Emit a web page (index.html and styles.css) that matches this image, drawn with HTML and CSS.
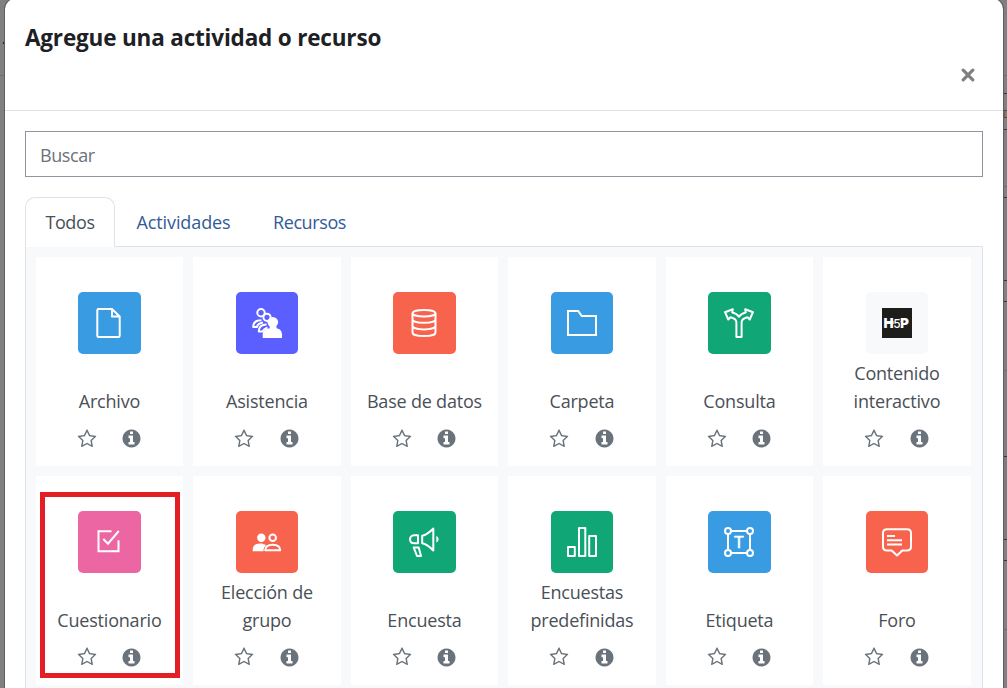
FILE: index.html
```html
<!DOCTYPE html>
<html lang="es">
    <head>
        <meta charset="UTF-8">
        <meta name="viewport" content="width=device-width, initial-scale=1.0">
        <title>Agregue una actividad o recurso</title>
        <link rel="stylesheet" href="styles.css">
    </head>
    <body>
        <!-- Shared icons -->
        <svg class="icon-defs" aria-hidden="true">
            <symbol id="star" viewBox="0 0 1792 1792"><path d="M1201 1004l306-297-422-62-189-382-189 382-422 62 306 297-73 421 378-199 377 199zm527-357q0 22-26 48l-363 354 86 500q1 7 1 20 0 50-41 50-19 0-40-12l-449-236-449 236q-22 12-40 12-21 0-31.500-14.500t-10.500-35.500q0-6 2-20l86-500-364-354q-25-27-25-48 0-37 56-46l502-73 225-455q19-41 49-41t49 41l225 455 502 73q56 9 56 46z"/></symbol>
            <symbol id="info" viewBox="0 0 1792 1792"><path d="M1152 1376v-160q0-14-9-23t-23-9h-96v-512q0-14-9-23t-23-9h-320q-14 0-23 9t-9 23v160q0 14 9 23t23 9h96v320h-96q-14 0-23 9t-9 23v160q0 14 9 23t23 9h448q14 0 23-9t9-23zm-128-896v-160q0-14-9-23t-23-9h-192q-14 0-23 9t-9 23v160q0 14 9 23t23 9h192q14 0 23-9t9-23zm640 416q0 209-103 385.500t-279.500 279.500-385.500 103-385.500-103-279.500-279.500-103-385.500 103-385.500 279.500-279.500 385.500-103 385.500 103 279.500 279.500 103 385.500z"/></symbol>
        </svg>

        <!-- Dimmed page behind the dialog -->
        <svg class="backdrop-left" viewBox="0 0 4 688" aria-hidden="true">
            <path d="M0 75.500h4" stroke="#6e6e6e"/>
            <path d="M4 42v2" stroke="#222" stroke-width="2"/>
        </svg>

        <div class="modal" role="dialog" aria-labelledby="modalTitle">
            <div class="modal-header">
                <h5 class="modal-title" id="modalTitle">Agregue una actividad o recurso</h5>
                <button type="button" class="close-btn" aria-label="Cerrar">
                    <svg viewBox="0 0 14 14"><path d="M2.200 2.200l9.600 9.600M11.800 2.200l-9.600 9.600"/></svg>
                </button>
            </div>
            <div class="modal-body">
                <input type="text" class="search-input" placeholder="Buscar">
                <ul class="tabs">
                    <li><a class="tab active">Todos</a></li>
                    <li><a class="tab tab-activities">Actividades</a></li>
                    <li><a class="tab tab-resources">Recursos</a></li>
                </ul>
                <div class="options">
                    <div class="option">
                        <div class="option-icon blue">
                            <svg viewBox="0 0 30 30"><path d="M18 1H4.500Q3.300 1 3.300 2.200V27.800Q3.300 29 4.500 29H24.500Q25.700 29 25.700 27.800V8.500L18 1V8.500H25.700"/></svg>
                        </div>
                        <div class="option-name"><span>Archivo</span></div>
                        <div class="option-actions"><svg class="star"><use href="#star"/></svg><svg class="info"><use href="#info"/></svg></div>
                    </div>
                    <div class="option">
                        <div class="option-icon purple">
                            <svg viewBox="0 0 30 30">
                                <circle cx="9" cy="4.700" r="3.700"/>
                                <path d="M9.500 12.300C4.500 12.300 1.200 14.500 1.200 19H5C5.500 16.500 7.500 15 11 14.500"/>
                                <circle class="cutout" cx="15" cy="9.300" r="3.600"/>
                                <path d="M14.500 16.500C9.500 16.500 6.800 19 6.800 23.500H10.500C11.500 21.500 13 20.500 15.500 19.500"/>
                                <circle class="solid" cx="20.800" cy="14.300" r="5.300"/>
                                <path class="solid" d="M10.700 30V27C10.700 22.500 14 20.500 17.500 20.500L18 18H24L25 20.500C28.500 21 30 23.500 30 27V30Z"/>
                            </svg>
                        </div>
                        <div class="option-name"><span>Asistencia</span></div>
                        <div class="option-actions"><svg class="star"><use href="#star"/></svg><svg class="info"><use href="#info"/></svg></div>
                    </div>
                    <div class="option">
                        <div class="option-icon red">
                            <svg viewBox="0 0 30 30">
                                <ellipse cx="15" cy="5.200" rx="11.500" ry="3.300"/>
                                <path d="M3.500 5.200V24.500C3.500 29.300 26.500 29.300 26.500 24.500V5.200M3.500 11.200C3.500 16 26.500 16 26.500 11.200M3.500 17.800C3.500 22.600 26.500 22.600 26.500 17.800"/>
                            </svg>
                        </div>
                        <div class="option-name"><span>Base de datos</span></div>
                        <div class="option-actions"><svg class="star"><use href="#star"/></svg><svg class="info"><use href="#info"/></svg></div>
                    </div>
                    <div class="option">
                        <div class="option-icon blue">
                            <svg viewBox="0 0 30 30"><path class="sharp" d="M1 27V3H11.200L14.800 8H29V27Z"/></svg>
                        </div>
                        <div class="option-name"><span>Carpeta</span></div>
                        <div class="option-actions"><svg class="star"><use href="#star"/></svg><svg class="info"><use href="#info"/></svg></div>
                    </div>
                    <div class="option">
                        <div class="option-icon green">
                            <svg viewBox="0 0 30 30"><path d="M12.400 29V14.500C12.400 12 10.500 10.200 6.500 9.300L4.300 11.500L1 4.200L8.800 1.200L8.300 4.400C11.500 5 13.500 6.500 15 8.800C16.500 6.500 18.500 5 21.700 4.400L21.200 1.200L29 4.200L25.700 11.500L23.500 9.300C19.500 10.200 17.600 12 17.600 14.500V29Z"/></svg>
                        </div>
                        <div class="option-name"><span>Consulta</span></div>
                        <div class="option-actions"><svg class="star"><use href="#star"/></svg><svg class="info"><use href="#info"/></svg></div>
                    </div>
                    <div class="option">
                        <div class="option-icon light">
                            <svg viewBox="0 0 30 30">
                                <rect class="h5p-bg" width="30" height="30"/>
                                <path class="h5p-bar" d="M3 14.500H14"/>
                                <text class="h5p-text" x="1.600" y="19.500">H</text>
                                <text class="h5p-text" x="17.900" y="19.500">P</text>
                                <text class="h5p-text five" x="11.300" y="20">5</text>
                            </svg>
                        </div>
                        <div class="option-name"><span>Contenido interactivo</span></div>
                        <div class="option-actions"><svg class="star"><use href="#star"/></svg><svg class="info"><use href="#info"/></svg></div>
                    </div>
                    <div class="option">
                        <div class="highlight"></div>
                        <div class="option-icon pink">
                            <svg viewBox="0 0 30 30"><path class="sharp" d="M17.500 4.300H4.500V24.300H24.500V13.300M9.300 12L14 16.700L24.800 4"/></svg>
                        </div>
                        <div class="option-name"><span>Cuestionario</span></div>
                        <div class="option-actions"><svg class="star"><use href="#star"/></svg><svg class="info"><use href="#info"/></svg></div>
                    </div>
                    <div class="option">
                        <div class="option-icon red">
                            <svg viewBox="0 0 30 30">
                                <circle class="solid" cx="9.300" cy="10.800" r="4.200"/>
                                <circle cx="20.700" cy="10.800" r="3.300"/>
                                <path class="solid" d="M.7 24.300V22.500C.7 18.500 4 16.500 8 16.500C10.500 16.500 12.500 17 14 18.300C12.300 19.800 11.500 21.500 11.500 24.300Z"/>
                                <path d="M13.200 23.300C13.200 19.500 16 17.700 20.700 17.700C25.300 17.700 28.200 19.500 28.200 23.300Z"/>
                            </svg>
                        </div>
                        <div class="option-name"><span>Elección de grupo</span></div>
                        <div class="option-actions"><svg class="star"><use href="#star"/></svg><svg class="info"><use href="#info"/></svg></div>
                    </div>
                    <div class="option">
                        <div class="option-icon green">
                            <svg viewBox="0 0 30 30">
                                <path d="M9 8.300H5C-.3 8.300-.3 16.300 5 16.300H9Z"/>
                                <path d="M13.200 8.700C17 8 21 5 24.300 1.500V23.500C21 20 17 17 13.200 16.300Z"/>
                                <path d="M4.700 20.500H9.700L12 29H8Z"/>
                                <path class="solid" d="M27.300 9C30.300 10 30.300 14.500 27.300 15.500Z"/>
                            </svg>
                        </div>
                        <div class="option-name"><span>Encuesta</span></div>
                        <div class="option-actions"><svg class="star"><use href="#star"/></svg><svg class="info"><use href="#info"/></svg></div>
                    </div>
                    <div class="option">
                        <div class="option-icon green">
                            <svg viewBox="0 0 30 30"><path d="M1 20H7.800V29H1ZM12 1H18.300V29H12ZM22.200 9H29V29H22.200Z"/></svg>
                        </div>
                        <div class="option-name"><span>Encuestas predefinidas</span></div>
                        <div class="option-actions"><svg class="star"><use href="#star"/></svg><svg class="info"><use href="#info"/></svg></div>
                    </div>
                    <div class="option">
                        <div class="option-icon blue">
                            <svg viewBox="0 0 30 30">
                                <path d="M7 4H23M7 26H23M4 7V23M26 7V23"/>
                                <circle cx="4" cy="4" r="3"/>
                                <circle cx="26" cy="4" r="3"/>
                                <circle cx="4" cy="26" r="3"/>
                                <circle cx="26" cy="26" r="3"/>
                                <text class="label-text" x="15" y="21">T</text>
                            </svg>
                        </div>
                        <div class="option-name"><span>Etiqueta</span></div>
                        <div class="option-actions"><svg class="star"><use href="#star"/></svg><svg class="info"><use href="#info"/></svg></div>
                    </div>
                    <div class="option">
                        <div class="option-icon red">
                            <svg viewBox="0 0 30 30"><path d="M5 2.200H25Q29 2.200 29 6V19.500Q29 23.500 25 23.500H20.300L15 28.500L9.700 23.500H5Q1 23.500 1 19.500V6Q1 2.200 5 2.200ZM5 9H13M5 13.300H20M5 17.500H20"/></svg>
                        </div>
                        <div class="option-name"><span>Foro</span></div>
                        <div class="option-actions"><svg class="star"><use href="#star"/></svg><svg class="info"><use href="#info"/></svg></div>
                    </div>
                </div>
            </div>
        </div>

        <svg class="backdrop-right" viewBox="0 0 3 688" aria-hidden="true">
            <path d="M0 197h3v84H0zM0 301h3v155H0z" fill="#7b7e7d"/>
            <path d="M0 456h3v83H0z" fill="#787d7f"/>
            <path d="M0 75.500h3M0 186.500h3M0 370.500h3M0 629.500h3" stroke="#6e6e6e"/>
            <path d="M0 93.500h3M0 129.500h3M0 197.500h3M0 280.500h3M0 301.500h3M0 456.500h3M0 539.500h3M0 560.500h3" stroke="#32383e"/>
            <path d="M3 110.500H0v7h3" fill="#8a7a6c" stroke="#4a4a4a"/>
        </svg>
    </body>
</html>
```

FILE: styles.css
```css
/* Global styles */
* {
    margin: 0;
    padding: 0;
    box-sizing: border-box;
}

body {
    background-color: #808080;
    color: #1d2125;
    height: 688px;
    display: flex;
    overflow: hidden;
    font-family: "Open Sans", "Noto Sans", sans-serif;
    font-size: 18px;
    line-height: 28px;
}

.icon-defs {
    display: none;
}

.backdrop-left {
    width: 4px;
    height: 688px;
    flex: none;
}

.backdrop-right {
    width: 3px;
    height: 688px;
    flex: none;
}

/* Dialog */
.modal {
    width: 1000px;
    height: 690px;
    flex: none;
    margin-top: -2px;
    background: #fff;
    background-clip: padding-box;
    border: 1px solid rgba(0, 0, 0, 0.25);
    border-bottom: none;
    border-radius: 11px 11px 0 0;
}

.modal-header {
    height: 112px;
    padding: 20px;
    display: flex;
    justify-content: space-between;
    align-items: flex-start;
    border-bottom: 1px solid #dee2e6;
}

.modal-title {
    font-size: 22.5px;
    font-weight: 700;
    line-height: 38px;
    letter-spacing: -0.18px;
    white-space: nowrap;
}

.close-btn {
    width: 30px;
    height: 30px;
    margin: 40.5px 0 0;
    display: flex;
    align-items: center;
    justify-content: center;
    background: none;
    border: none;
}

.close-btn svg {
    width: 14px;
    height: 14px;
    stroke: #808080;
    stroke-width: 3.2;
    stroke-linecap: round;
}

.modal-body {
    padding: 20px 20px 0;
}

.search-input {
    display: block;
    width: 958px;
    height: 46px;
    padding: 2px 15px 0 14px;
    border: 1px solid #8f959e;
    border-radius: 0;
    font-family: inherit;
    font-size: 18px;
    letter-spacing: -0.4px;
    outline: none;
}

.search-input::placeholder {
    color: #6a737b;
    opacity: 1;
}

/* Tabs */
.tabs {
    display: flex;
    list-style: none;
    margin-top: 20px;
    position: relative;
}

.tab {
    display: block;
    width: 90px;
    height: 50px;
    padding-top: 10px;
    border: 1px solid transparent;
    border-radius: 10px 10px 0 0;
    color: #315b98;
    text-align: center;
    letter-spacing: -0.4px;
}

.tab.active {
    background: #fff;
    color: #495057;
    border-color: #dee2e6;
    border-bottom-color: #fff;
}

.tab-activities {
    width: 137px;
    letter-spacing: -0.1px;
}

.tab-resources {
    width: 115px;
}

/* Activity grid */
.options {
    width: 958px;
    height: 442px;
    margin-top: -1px;
    padding: 10px 11.3px 0 9.7px;
    display: grid;
    grid-template-columns: repeat(6, 1fr);
    grid-auto-rows: 208.75px;
    gap: 10px;
    background: #f8f9fb;
    border: 1px solid #dee2e6;
    border-bottom: none;
}

.option {
    position: relative;
    padding-top: 35px;
    display: flex;
    flex-direction: column;
    align-items: center;
    background: #fff;
}

.option-icon {
    width: 62.5px;
    height: 62px;
    display: flex;
    align-items: center;
    justify-content: center;
    border-radius: 5px;
}

.option-icon svg {
    width: 30px;
    height: 30px;
    fill: none;
    stroke: #fff;
    stroke-width: 2;
    stroke-linejoin: round;
}

.option-icon .solid {
    fill: #fff;
    stroke: none;
}

.option-icon .sharp {
    stroke-linejoin: miter;
}

.option-icon .cutout {
    fill: #5b5fff;
}

.blue {
    background: #399be2;
}

.purple {
    background: #5b5fff;
}

.red {
    background: #f7634d;
}

.green {
    background: #11a676;
}

.pink {
    background: #eb66a2;
}

.light {
    background: #f8f9fa;
}

.option-icon .h5p-bg {
    fill: #1d1d1b;
    stroke: none;
}

.h5p-bar {
    stroke-width: 3;
}

.h5p-text {
    font-family: Inter, sans-serif;
    font-size: 13.5px;
    font-weight: 900;
    fill: #fff;
    stroke: none;
}

.h5p-text.five {
    font-size: 12px;
    font-weight: 500;
    stroke: #1d1d1b;
    stroke-width: 1.6px;
    paint-order: stroke;
}

.label-text {
    font-family: "Liberation Sans", sans-serif;
    font-size: 16px;
    text-anchor: middle;
    fill: #fff;
    stroke-width: 0.6;
}

.option-name {
    width: 130px;
    height: 56px;
    margin-top: 5px;
    display: flex;
    align-items: flex-end;
    justify-content: center;
    color: #495057;
    text-align: center;
    letter-spacing: -0.2px;
}

.option-actions {
    width: 65.5px;
    margin-top: 13px;
    display: flex;
    align-items: center;
    justify-content: space-between;
    fill: #6a737b;
}

.star {
    width: 20px;
    height: 20px;
}

.info {
    width: 21px;
    height: 21px;
}

.highlight {
    position: absolute;
    left: 4px;
    top: 16px;
    width: 140px;
    height: 186px;
    border: 5px solid #e31e24;
}
```
